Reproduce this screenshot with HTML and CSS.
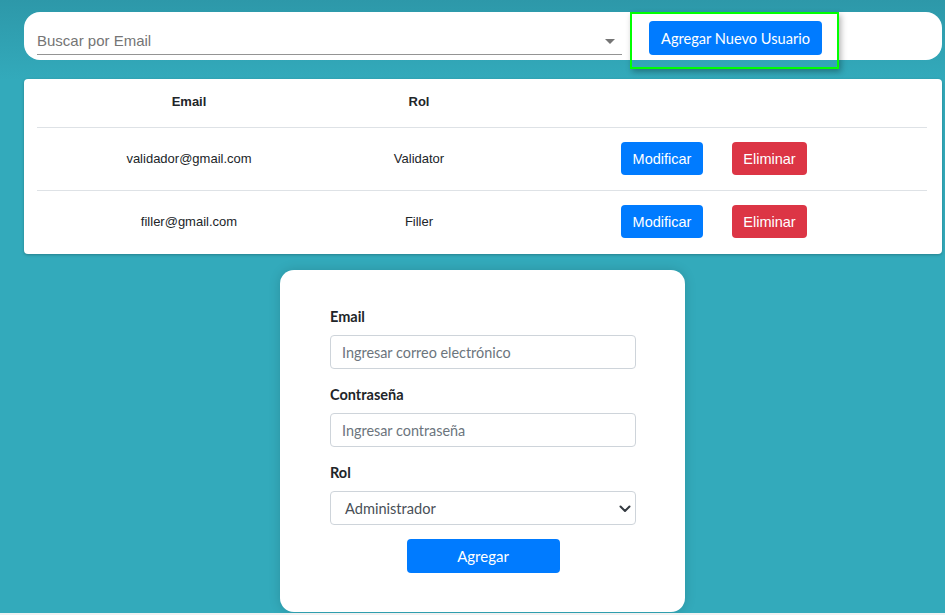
FILE: index.html
```html
<!DOCTYPE html>
<html lang="es">
<head>
<meta charset="utf-8">
<title>Usuarios</title>
<link rel="stylesheet" href="styles.css">
</head>
<body>
<div class="page">
  <div class="topbar">
    <div class="search">
      <span class="search-text">Buscar por Email</span>
      <span class="caret"></span>
    </div>
    <div class="focus-box">
      <button class="btn btn-primary btn-new">Agregar Nuevo Usuario</button>
    </div>
  </div>

  <div class="table-card">
    <div class="row head">
      <div class="cell">Email</div>
      <div class="cell">Rol</div>
      <div class="cell"></div>
    </div>
    <div class="row">
      <div class="cell">validador@gmail.com</div>
      <div class="cell">Validator</div>
      <div class="cell actions">
        <button class="btn btn-primary btn-mod">Modificar</button>
        <button class="btn btn-danger btn-del">Eliminar</button>
      </div>
    </div>
    <div class="row last">
      <div class="cell">filler@gmail.com</div>
      <div class="cell">Filler</div>
      <div class="cell actions">
        <button class="btn btn-primary btn-mod">Modificar</button>
        <button class="btn btn-danger btn-del">Eliminar</button>
      </div>
    </div>
  </div>

  <div class="form-card">
    <label class="label first">Email</label>
    <div class="input"><span class="placeholder">Ingresar correo electrónico</span></div>
    <label class="label">Contraseña</label>
    <div class="input"><span class="placeholder">Ingresar contraseña</span></div>
    <label class="label">Rol</label>
    <div class="select">
      <span class="select-value">Administrador</span>
      <svg class="chevron" width="12" height="8" viewBox="0 0 12 8"><path d="M1.5 1.5 L6 6 L10.5 1.5" fill="none" stroke="#343a40" stroke-width="2" stroke-linecap="round" stroke-linejoin="round"/></svg>
    </div>
    <div class="submit-wrap">
      <button class="btn btn-primary btn-submit">Agregar</button>
    </div>
  </div>
</div>
</body>
</html>
```

FILE: styles.css
```css
html {
  background: #f1f1f1;
}
body {
  margin: 0;
}
.page {
  height: 613px;
  box-sizing: border-box;
  padding: 12px 3px 0 24px;
  background: linear-gradient(to bottom, #2d98a9 0px, #33aabb 80px, #33aabb 100%);
  overflow: hidden;
}
.topbar {
  height: 48px;
  background: #fff;
  border-radius: 16px;
  display: flex;
  align-items: flex-start;
  padding-left: 13px;
}
.search {
  width: 585px;
  height: 26px;
  margin-top: 16px;
  border-bottom: 1px solid #949494;
  display: flex;
  align-items: center;
  justify-content: space-between;
  box-sizing: content-box;
}
.search-text {
  font-family: "Liberation Sans", Arial, sans-serif;
  font-size: 15px;
  color: #757575;
  margin-top: -2px;
}
.caret {
  width: 0;
  height: 0;
  border-left: 5px solid transparent;
  border-right: 5px solid transparent;
  border-top: 5px solid #757575;
  margin-right: 7px;
}
.focus-box {
  margin-left: 8px;
  width: 209px;
  height: 57px;
  box-sizing: border-box;
  border: 2px solid #00ff00;
  padding: 7px 0 0 17px;
  box-shadow: 2px 3px 6px rgba(0, 0, 0, 0.3);
  position: relative;
  z-index: 1;
}
.btn {
  border: none;
  border-radius: 4px;
  color: #fff;
  padding: 0;
  cursor: pointer;
}
.btn-primary {
  background: #007bff;
}
.btn-danger {
  background: #dc3545;
}
.btn-new {
  width: 173px;
  height: 34px;
  font-family: Lato, "Noto Sans", sans-serif;
  font-size: 14.6px;
}
.table-card {
  margin-top: 19px;
  background: #fff;
  border-radius: 4px;
  padding: 0 15px 0 13px;
  box-shadow: 0 1px 3px rgba(0, 0, 0, 0.25);
}
.row {
  display: grid;
  grid-template-columns: 304px 156px 430px;
  height: 61px;
  padding-bottom: 1px;
  border-top: 1px solid #dee2e6;
  font-family: "Liberation Sans", Arial, sans-serif;
  font-size: 13px;
  color: #212529;
}
.row.head {
  height: 44px;
  border-top: none;
  font-weight: bold;
  padding-bottom: 4px;
}
.row.last {
  height: 61px;
  padding-bottom: 2px;
}
.cell {
  display: flex;
  align-items: center;
  justify-content: center;
}
.actions {
  gap: 29px;
  padding-left: 4px;
}
.btn-mod,
.btn-del {
  height: 33px;
  font-family: "Liberation Sans", Arial, sans-serif;
  font-size: 14.5px;
}
.btn-mod {
  width: 82px;
}
.btn-del {
  width: 75px;
}
.form-card {
  margin: 16px 0 0 256px;
  width: 405px;
  height: 342px;
  box-sizing: border-box;
  background: #fff;
  border-radius: 14px;
  padding: 36px 49px 0 50px;
  box-shadow: 0 0 12px rgba(0, 0, 0, 0.15);
  font-family: Lato, "Noto Sans", sans-serif;
}
.label {
  display: block;
  font-weight: bold;
  font-size: 14.5px;
  line-height: 22px;
  color: #212529;
  margin: 15px 0 7px;
}
.label.first {
  margin-top: 0;
}
.input,
.select {
  height: 34px;
  box-sizing: border-box;
  border: 1px solid #ced4da;
  border-radius: 4px;
  display: flex;
  align-items: center;
  font-size: 14.4px;
}
.input {
  padding-left: 11px;
}
.placeholder {
  color: #6c757d;
}
.select {
  position: relative;
  padding-left: 14px;
  font-size: 14.6px;
}
.select-value {
  color: #495057;
}
.chevron {
  position: absolute;
  right: 4px;
  top: 13px;
}
.submit-wrap {
  display: flex;
  justify-content: center;
  margin-top: 14px;
}
.btn-submit {
  width: 153px;
  height: 34px;
  font-family: Lato, "Noto Sans", sans-serif;
  font-size: 15px;
}
```
